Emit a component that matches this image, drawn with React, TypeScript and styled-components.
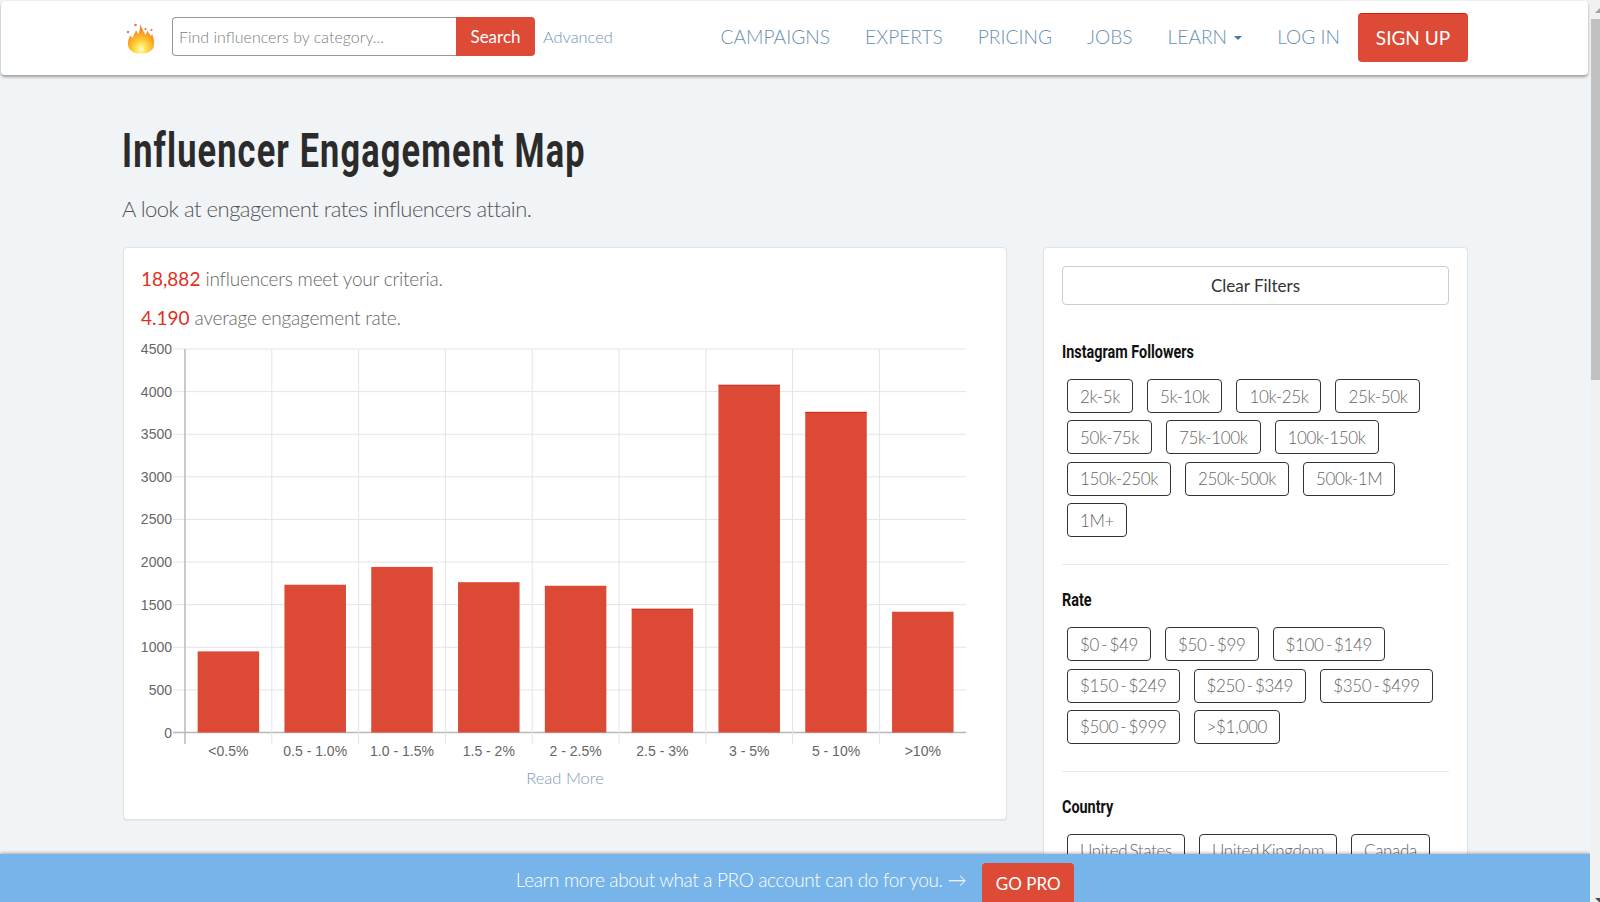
import { createGlobalStyle, styled } from 'styled-components';

const GlobalStyle = createGlobalStyle`
  html, body {
    margin: 0;
    padding: 0;
    height: 100%;
    overflow: hidden;
    background: #f0f4f7;
    font-family: "Lato", "Liberation Sans", sans-serif;
  }
  * { box-sizing: border-box; }
`;

const Frame = styled.div`
  display: flex;
  width: 1600px;
  height: 902px;
  overflow: hidden;
`;

const Viewport = styled.div`
  position: relative;
  width: 1590px;
  height: 902px;
  overflow: hidden;
  padding-top: 1px;
`;

const Scrollbar = styled.div`
  width: 10px;
  height: 902px;
  background: #f1f1f1;
  display: flex;
  flex-direction: column;
  align-items: flex-end;
  justify-content: space-between;
  position: relative;
  overflow: hidden;
`;

const ScrollThumb = styled.div`
  position: absolute;
  top: 19px;
  left: 1px;
  width: 9px;
  height: 361px;
  background: #c1c1c1;
`;

const ScrollArrow = styled.div<{ $down?: boolean }>`
  margin: ${(props: { $down?: boolean }) => props.$down ? '0 -5px -1px 0' : '8px -5px 0 0'};
  width: 0;
  height: 0;
  border-left: 5px solid transparent;
  border-right: 5px solid transparent;
  ${(props: { $down?: boolean }) => props.$down
    ? 'border-top: 5px solid #505050;'
    : 'border-bottom: 5px solid #a3a3a3;'}
`;

const Navbar = styled.nav`
  height: 74px;
  margin: 0 2px 0 1px;
  background: #fff;
  border-radius: 4px;
  box-shadow: 0 2px 3px rgba(0, 0, 0, 0.35);
  display: flex;
  align-items: center;
  padding: 0 120px 2px 125px;
`;

const Logo = styled.svg`
  width: 30px;
  height: 34px;
  margin-right: 16px;
  margin-top: 1px;
`;

const SearchForm = styled.form`
  display: flex;
  width: 363px;
  height: 39px;
  margin-top: -2px;
`;

const SearchInput = styled.input`
  flex: 1;
  min-width: 0;
  height: 39px;
  border: 1px solid #999;
  border-right: none;
  border-radius: 4px 0 0 4px;
  padding: 0 6px;
  font-family: "Lato", sans-serif;
  font-weight: 300;
  font-size: 16px;
  outline: none;
  &::placeholder {
    color: #7d7d7d;
    opacity: 1;
  }
`;

const SearchButton = styled.button`
  width: 79px;
  height: 39px;
  border: none;
  border-radius: 0 4px 4px 0;
  background: #dd4b36;
  color: #fff;
  font-family: "Lato", sans-serif;
  font-size: 17px;
  padding: 0;
`;

const AdvancedLink = styled.a`
  margin: -2px 0 0 8px;
  color: #7494b4;
  font-weight: 300;
  font-size: 16.4px;
`;

const NavLinks = styled.div`
  margin-left: auto;
  display: flex;
  align-items: center;
`;

const NavLink = styled.a`
  color: #6b8fb2;
  font-weight: 300;
  font-size: 19.2px;
  margin: -2px 35px 0 0;
  display: flex;
  align-items: center;
  &:nth-last-child(2) {
    margin-right: 18px;
  }
`;

const Caret = styled.span`
  display: inline-block;
  margin-left: 7px;
  margin-top: 3px;
  width: 0;
  height: 0;
  border-left: 4.5px solid transparent;
  border-right: 4.5px solid transparent;
  border-top: 4.5px solid #4a769f;
`;

const SignUp = styled.button`
  width: 110px;
  height: 49px;
  border: none;
  border-top: 1px solid #c9200f;
  border-radius: 4px;
  background: #dd4b36;
  color: #fff;
  font-family: "Lato", sans-serif;
  font-size: 19px;
  padding: 0;
`;

const Page = styled.main`
  padding: 0 122px;
`;

const Title = styled.h1`
  margin: 47px 0 0;
  font-family: "Roboto", "Liberation Sans", sans-serif;
  font-weight: 700;
  font-size: 49px;
  line-height: 58px;
  letter-spacing: 1.64px;
  color: #2b2b2b;
  white-space: nowrap;
  transform: scaleX(0.7);
  transform-origin: left center;
`;

const Subtitle = styled.p`
  margin: 14px 0 0;
  font-weight: 300;
  font-size: 22px;
  line-height: 30px;
  letter-spacing: -0.5px;
  color: #555;
`;

const Columns = styled.div`
  display: grid;
  grid-template-columns: 884px 425px;
  gap: 36px;
  margin-top: 23px;
  padding-left: 1px;
`;

const Card = styled.section`
  background: #fff;
  border: 1px solid #dfe3e6;
  border-radius: 4px;
  box-shadow: 0 1px 1px rgba(0, 0, 0, 0.06);
`;

const ChartCard = styled(Card)`
  height: 573px;
  padding: 20px 17px 0;
`;

const FilterCard = styled(Card)`
  height: 800px;
  padding: 18px 18px 0;
`;

const Stat = styled.p`
  margin: 0 0 17px;
  font-weight: 300;
  font-size: 19px;
  line-height: 22px;
  letter-spacing: -0.2px;
  color: #666;
`;

const StatValue = styled.strong`
  font-weight: 400;
  letter-spacing: 0;
  color: #e0301e;
`;

const ChartSvg = styled.svg`
  display: block;
  margin-left: -18px;
  margin-top: -6px;
  text {
    font-family: "Liberation Sans", Arial, sans-serif;
    font-size: 14px;
    fill: #666;
  }
`;

const ReadMore = styled.a`
  display: block;
  text-align: center;
  margin-top: -4px;
  color: #7f9bb8;
  font-weight: 300;
  font-size: 16.5px;
`;

const ClearButton = styled.button`
  display: block;
  width: 100%;
  height: 39px;
  background: #fff;
  border: 1px solid #ccc;
  border-radius: 4px;
  color: #333;
  font-family: "Lato", sans-serif;
  font-size: 17px;
  padding: 0;
`;

const FilterGroup = styled.div`
  padding: 35px 0 27px;
  border-bottom: 1px solid #e8e8e8;
  &:last-child {
    border-bottom: none;
  }
  & + & {
    padding-top: 23px;
  }
`;

const FilterTitle = styled.h4`
  margin: 0 0 15px;
  font-family: "Roboto", "Liberation Sans", sans-serif;
  font-weight: 700;
  font-size: 18px;
  line-height: 24px;
  color: #111;
  white-space: nowrap;
  transform: scaleX(0.8);
  transform-origin: left center;
`;

const ChipList = styled.div`
  display: flex;
  flex-wrap: wrap;
  gap: 7.4px 14px;
  padding-left: 5px;
`;

const Chip = styled.button`
  height: 34px;
  padding: 0 12px;
  background: #fff;
  border: 1px solid #333;
  border-radius: 4px;
  color: #666;
  font-family: "Lato", sans-serif;
  font-weight: 300;
  font-size: 17px;
  letter-spacing: -0.35px;
  word-spacing: -2px;
`;

const ProBar = styled.div`
  position: absolute;
  left: 0;
  right: 0;
  bottom: 0;
  height: 48px;
  background: #76b4e9;
  box-shadow: 0 -1px 3px rgba(0, 0, 0, 0.3);
  display: flex;
  justify-content: center;
  padding-top: 9px;
  gap: 16px;
`;

const ProText = styled.span`
  color: #fff;
  font-weight: 300;
  font-size: 19px;
  letter-spacing: -0.34px;
  line-height: 34px;
`;

const ProButton = styled.button`
  width: 92px;
  height: 44px;
  padding: 0 0 4px;
  border: none;
  border-radius: 4px;
  background: #dd4b36;
  color: #fff;
  font-family: "Lato", sans-serif;
  font-size: 17px;
`;

const followers = ['2k-5k', '5k-10k', '10k-25k', '25k-50k', '50k-75k', '75k-100k', '100k-150k', '150k-250k', '250k-500k', '500k-1M', '1M+'];
const rates = ['$0 - $49', '$50 - $99', '$100 - $149', '$150 - $249', '$250 - $349', '$350 - $499', '$500 - $999', '>$1,000'];
const countries = ['United States', 'United Kingdom', 'Canada'];

const bars = [
  { label: '<0.5%', value: 952 },
  { label: '0.5 - 1.0%', value: 1734 },
  { label: '1.0 - 1.5%', value: 1943 },
  { label: '1.5 - 2%', value: 1764 },
  { label: '2 - 2.5%', value: 1722 },
  { label: '2.5 - 3%', value: 1447, edge: true },
  { label: '3 - 5%', value: 4075, edge: true },
  { label: '5 - 10%', value: 3757, edge: true },
  { label: '>10%', value: 1417 },
];

const AXIS_X = 62;
const TOP_Y = 9;
const ZERO_Y = 392.5;
const STEP_X = 86.8;
const BAR_W = 61.5;

function EngagementChart() {
  const ticks = [0, 500, 1000, 1500, 2000, 2500, 3000, 3500, 4000, 4500];
  const yFor = (v: number) => ZERO_Y - (v / 4500) * (ZERO_Y - TOP_Y);
  const right = AXIS_X + STEP_X * 9;
  return (
    <ChartSvg width={880} height={432} viewBox="0 0 880 432">
      {ticks.map((t) => (
        <g key={t}>
          <line x1={50} x2={right} y1={yFor(t)} y2={yFor(t)} stroke={t === 0 ? '#b8b8b8' : '#e4e4e4'} strokeWidth={t === 0 ? 1.5 : 1} />
          <text x={49} y={yFor(t) + 5} textAnchor="end">{t}</text>
        </g>
      ))}
      {bars.map((b, i) => (
        <line key={b.label} x1={AXIS_X + STEP_X * i} x2={AXIS_X + STEP_X * i} y1={TOP_Y} y2={404} stroke={i === 0 ? '#b8b8b8' : '#e4e4e4'} strokeWidth={i === 0 ? 1.5 : 1} />
      ))}
      {bars.map((b, i) => {
        const x = AXIS_X + STEP_X * i + (STEP_X - BAR_W) / 2;
        const y = yFor(b.value);
        return (
          <g key={b.label}>
            <rect x={x} y={y} width={BAR_W} height={ZERO_Y - y} fill="#dc4a35" />
            {b.edge && <line x1={x} x2={x + BAR_W} y1={y} y2={y} stroke="#c9200f" />}
          </g>
        );
      })}
      {bars.map((b, i) => (
        <text key={b.label} x={AXIS_X + STEP_X * (i + 0.5)} y={416} textAnchor="middle">{b.label}</text>
      ))}
    </ChartSvg>
  );
}

function Flame() {
  return (
    <Logo viewBox="0 0 30 34">
      <defs>
        <radialGradient id="flameFill" cx="50%" cy="85%" r="80%">
          <stop offset="0%" stopColor="#fffde8" />
          <stop offset="22%" stopColor="#ffe650" />
          <stop offset="55%" stopColor="#fdb32a" />
          <stop offset="100%" stopColor="#ef6a1c" />
        </radialGradient>
      </defs>
      <path
        d="M14.5 3 C15.5 8 18 10.5 19.5 14 C20.5 12.5 21 11 21.3 9.5 C22.5 12 24 13 24.7 15 C25.3 14.5 25.7 14 26 13 C27.7 17 28.5 20 28 24 C27.3 29.5 23 32.5 15 32.5 C7 32.5 2.7 29.5 2 24 C1.6 20.5 2.6 17.5 4.3 14.5 C5 15.5 5.7 16.3 6.8 17 C7.2 14 9 12.5 10 9.5 C11 10.5 11.7 12 12 13.5 C13.5 10.5 14.3 7 14.5 3 Z"
        fill="url(#flameFill)"
      />
      <circle cx="9.5" cy="4" r="1.3" fill="#ee6a5c" />
      <circle cx="2" cy="11" r="1.2" fill="#ee6a5c" />
      <circle cx="19.5" cy="8" r="1.1" fill="#ee6a5c" />
      <circle cx="25.5" cy="9" r="1.1" fill="#ee6a5c" />
    </Logo>
  );
}

export default function App() {
  return (
    <Frame>
      <GlobalStyle />
      <Viewport>
        <Navbar>
          <Flame />
          <SearchForm>
            <SearchInput placeholder="Find influencers by category..." />
            <SearchButton type="button">Search</SearchButton>
          </SearchForm>
          <AdvancedLink>Advanced</AdvancedLink>
          <NavLinks>
            <NavLink>CAMPAIGNS</NavLink>
            <NavLink>EXPERTS</NavLink>
            <NavLink>PRICING</NavLink>
            <NavLink>JOBS</NavLink>
            <NavLink>LEARN<Caret /></NavLink>
            <NavLink>LOG IN</NavLink>
            <SignUp type="button">SIGN UP</SignUp>
          </NavLinks>
        </Navbar>
        <Page>
          <Title>Influencer Engagement Map</Title>
          <Subtitle>A look at engagement rates influencers attain.</Subtitle>
          <Columns>
            <ChartCard>
              <Stat><StatValue>18,882</StatValue> influencers meet your criteria.</Stat>
              <Stat><StatValue>4.190</StatValue> average engagement rate.</Stat>
              <EngagementChart />
              <ReadMore>Read More</ReadMore>
            </ChartCard>
            <FilterCard>
              <ClearButton type="button">Clear Filters</ClearButton>
              <FilterGroup>
                <FilterTitle>Instagram Followers</FilterTitle>
                <ChipList>{followers.map((f) => <Chip key={f} type="button">{f}</Chip>)}</ChipList>
              </FilterGroup>
              <FilterGroup>
                <FilterTitle>Rate</FilterTitle>
                <ChipList>{rates.map((r) => <Chip key={r} type="button">{r}</Chip>)}</ChipList>
              </FilterGroup>
              <FilterGroup>
                <FilterTitle>Country</FilterTitle>
                <ChipList>{countries.map((c) => <Chip key={c} type="button">{c}</Chip>)}</ChipList>
              </FilterGroup>
            </FilterCard>
          </Columns>
        </Page>
        <ProBar>
          <ProText>Learn more about what a PRO account can do for you. →</ProText>
          <ProButton type="button">GO PRO</ProButton>
        </ProBar>
      </Viewport>
      <Scrollbar>
        <ScrollArrow />
        <ScrollThumb />
        <ScrollArrow $down />
      </Scrollbar>
    </Frame>
  );
}
